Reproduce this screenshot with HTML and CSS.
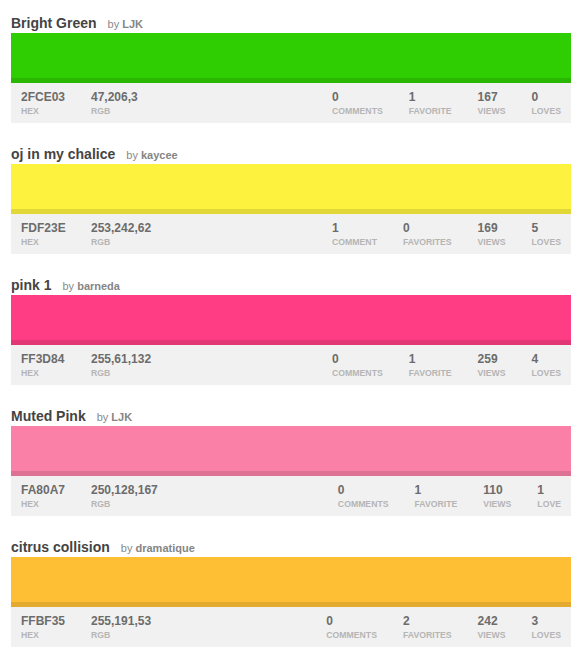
FILE: index.html
```html
<!DOCTYPE html>
<html>
<head>
<meta charset="utf-8">
<link rel="stylesheet" href="styles.css">
</head>
<body>
<div class="list">
  <div class="card">
    <div class="head"><span class="title">Bright Green</span><span class="by">by <b>LJK</b></span></div>
    <div class="swatch" style="background:#2FCE03"></div>
    <div class="info">
      <div class="stat col"><div class="val">2FCE03</div><div class="lbl">HEX</div></div>
      <div class="stat"><div class="val">47,206,3</div><div class="lbl">RGB</div></div>
      <div class="stats">
        <div class="stat"><div class="val">0</div><div class="lbl">COMMENTS</div></div>
        <div class="stat"><div class="val">1</div><div class="lbl">FAVORITE</div></div>
        <div class="stat"><div class="val">167</div><div class="lbl">VIEWS</div></div>
        <div class="stat"><div class="val">0</div><div class="lbl">LOVES</div></div>
      </div>
    </div>
  </div>
  <div class="card">
    <div class="head"><span class="title">oj in my chalice</span><span class="by">by <b>kaycee</b></span></div>
    <div class="swatch" style="background:#FDF23E"></div>
    <div class="info">
      <div class="stat col"><div class="val">FDF23E</div><div class="lbl">HEX</div></div>
      <div class="stat"><div class="val">253,242,62</div><div class="lbl">RGB</div></div>
      <div class="stats">
        <div class="stat"><div class="val">1</div><div class="lbl">COMMENT</div></div>
        <div class="stat"><div class="val">0</div><div class="lbl">FAVORITES</div></div>
        <div class="stat"><div class="val">169</div><div class="lbl">VIEWS</div></div>
        <div class="stat"><div class="val">5</div><div class="lbl">LOVES</div></div>
      </div>
    </div>
  </div>
  <div class="card">
    <div class="head"><span class="title">pink 1</span><span class="by">by <b>barneda</b></span></div>
    <div class="swatch" style="background:#FF3D84"></div>
    <div class="info">
      <div class="stat col"><div class="val">FF3D84</div><div class="lbl">HEX</div></div>
      <div class="stat"><div class="val">255,61,132</div><div class="lbl">RGB</div></div>
      <div class="stats">
        <div class="stat"><div class="val">0</div><div class="lbl">COMMENTS</div></div>
        <div class="stat"><div class="val">1</div><div class="lbl">FAVORITE</div></div>
        <div class="stat"><div class="val">259</div><div class="lbl">VIEWS</div></div>
        <div class="stat"><div class="val">4</div><div class="lbl">LOVES</div></div>
      </div>
    </div>
  </div>
  <div class="card">
    <div class="head"><span class="title">Muted Pink</span><span class="by">by <b>LJK</b></span></div>
    <div class="swatch" style="background:#FA80A7"></div>
    <div class="info">
      <div class="stat col"><div class="val">FA80A7</div><div class="lbl">HEX</div></div>
      <div class="stat"><div class="val">250,128,167</div><div class="lbl">RGB</div></div>
      <div class="stats">
        <div class="stat"><div class="val">0</div><div class="lbl">COMMENTS</div></div>
        <div class="stat"><div class="val">1</div><div class="lbl">FAVORITE</div></div>
        <div class="stat"><div class="val">110</div><div class="lbl">VIEWS</div></div>
        <div class="stat"><div class="val">1</div><div class="lbl">LOVE</div></div>
      </div>
    </div>
  </div>
  <div class="card">
    <div class="head"><span class="title">citrus collision</span><span class="by">by <b>dramatique</b></span></div>
    <div class="swatch" style="background:#FFBF35"></div>
    <div class="info">
      <div class="stat col"><div class="val">FFBF35</div><div class="lbl">HEX</div></div>
      <div class="stat"><div class="val">255,191,53</div><div class="lbl">RGB</div></div>
      <div class="stats">
        <div class="stat"><div class="val">0</div><div class="lbl">COMMENTS</div></div>
        <div class="stat"><div class="val">2</div><div class="lbl">FAVORITES</div></div>
        <div class="stat"><div class="val">242</div><div class="lbl">VIEWS</div></div>
        <div class="stat"><div class="val">3</div><div class="lbl">LOVES</div></div>
      </div>
    </div>
  </div>
</div>
</body>
</html>
```

FILE: styles.css
```css
html, body {
  margin: 0;
  padding: 0;
  background: #fff;
}
body {
  font-family: "Liberation Sans", Arial, Helvetica, sans-serif;
}
.list {
  padding: 15px 10px 0 11px;
  width: 560px;
  display: flex;
  flex-direction: column;
  gap: 23px;
}
.head {
  display: flex;
  align-items: baseline;
  height: 17px;
  margin-bottom: 1px;
  white-space: nowrap;
}
.title {
  font-size: 14px;
  line-height: 17px;
  font-weight: bold;
  color: #444;
}
.by {
  font-size: 11px;
  color: #8a8a8a;
  margin-left: 11px;
}
.by b {
  font-weight: bold;
  color: #858585;
}
.swatch {
  height: 45px;
  border-bottom: 5px solid rgba(0, 0, 0, 0.11);
}
.info {
  background: #f1f1f1;
  height: 40px;
  box-sizing: border-box;
  padding: 7px 10px 0 10px;
  display: flex;
  align-items: flex-start;
}
.col {
  width: 70px;
}
.stats {
  margin-left: auto;
  display: flex;
  gap: 26px;
}
.val {
  font-size: 12px;
  line-height: 14px;
  font-weight: bold;
  color: #6c6c6c;
}
.lbl {
  font-size: 8.7px;
  line-height: 10px;
  font-weight: bold;
  color: #b5b5b5;
  margin-top: 1.5px;
}
```
